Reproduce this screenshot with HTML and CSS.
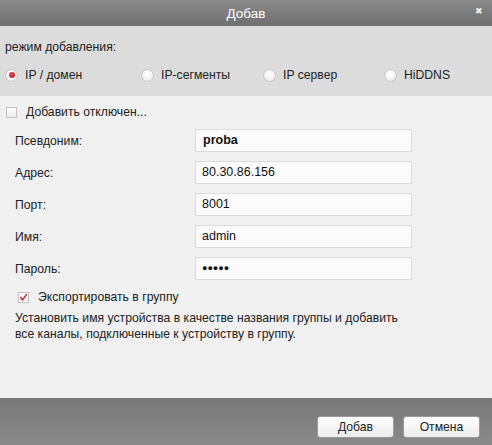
FILE: index.html
```html
<!DOCTYPE html>
<html lang="ru">
<head>
<meta charset="utf-8">
<title>Добав</title>
<link rel="stylesheet" href="styles.css">
</head>
<body>
<div class="dialog">
  <div class="titlebar">
    <span class="title">Добав</span>
    <span class="close">&#x2716;</span>
  </div>
  <div class="mode">
    <div class="mode-label">режим добавления:</div>
    <div class="radios">
      <div class="radio r1"><span class="dot on"></span><span>IP / домен</span></div>
      <div class="radio r2"><span class="dot"></span><span>IP-сегменты</span></div>
      <div class="radio r3"><span class="dot"></span><span>IP сервер</span></div>
      <div class="radio r4"><span class="dot"></span><span>HiDDNS</span></div>
    </div>
  </div>
  <div class="main">
    <div class="check-row top">
      <span class="box"></span><span>Добавить отключен...</span>
    </div>
    <div class="fields">
      <div class="field"><span class="label">Псевдоним:</span><div class="input bold">proba</div></div>
      <div class="field"><span class="label">Адрес:</span><div class="input">80.30.86.156</div></div>
      <div class="field"><span class="label">Порт:</span><div class="input">8001</div></div>
      <div class="field"><span class="label">Имя:</span><div class="input">admin</div></div>
      <div class="field"><span class="label">Пароль:</span><div class="input pass">&#9679;&#9679;&#9679;&#9679;&#9679;</div></div>
    </div>
    <div class="check-row export">
      <span class="box checked">
        <svg width="11" height="11" viewBox="0 0 11 11"><path d="M2 5.5 L4.5 8.5 L9 2" fill="none" stroke="#c0262a" stroke-width="1.8" stroke-linecap="round" stroke-linejoin="round"/></svg>
      </span><span>Экспортировать в группу</span>
    </div>
    <p class="desc">Установить имя устройства в качестве названия группы и добавить<br>все каналы, подключенные к устройству в группу.</p>
  </div>
  <div class="footer">
    <button class="btn">Добав</button>
    <button class="btn">Отмена</button>
  </div>
</div>
</body>
</html>
```

FILE: styles.css
```css
html, body {
  margin: 0;
  padding: 0;
}
body {
  font-family: "Liberation Sans", Arial, sans-serif;
  font-size: 12.2px;
  color: #222222;
  background: #f0f0f0;
}
.dialog {
  width: 492px;
  height: 445px;
  display: flex;
  flex-direction: column;
}
.titlebar {
  position: relative;
  height: 26px;
  background: linear-gradient(#8a8a8a, #6f6f6f);
  display: flex;
  align-items: center;
  justify-content: center;
  color: #ffffff;
  font-size: 13.5px;
}
.close {
  position: absolute;
  right: 9px;
  top: 6px;
  font-size: 9px;
  color: #f2f2f2;
}
.mode {
  height: 70px;
  box-sizing: border-box;
  background: #dcdcdc;
  padding: 13px 0 0 5px;
}
.mode-label {
  line-height: 16px;
}
.radios {
  display: flex;
  margin-top: 12px;
  line-height: 16px;
}
.radio {
  display: flex;
  align-items: center;
  gap: 7px;
}
.r1 { width: 136px; }
.r2 { width: 122px; }
.r3 { width: 121px; }
.dot {
  width: 13px;
  height: 13px;
  border-radius: 50%;
  box-sizing: border-box;
  border: 1px solid #c8c8c8;
  background: radial-gradient(circle at 50% 40%, #ffffff 0%, #f4f4f4 50%, #dedede 100%);
  position: relative;
}
.dot.on::after {
  content: "";
  position: absolute;
  left: 2.5px;
  top: 2.5px;
  width: 6px;
  height: 6px;
  border-radius: 50%;
  background: radial-gradient(circle at 45% 40%, #e0505a, #b8141e);
}
.main {
  flex: 1;
  background: #f0f0f0;
  padding: 8px 0 0 0;
}
.check-row {
  display: flex;
  align-items: center;
  gap: 9px;
  line-height: 16px;
}
.check-row.top {
  padding-left: 6px;
}
.check-row.export {
  padding-left: 18px;
  margin-top: 9px;
}
.box {
  width: 11px;
  height: 11px;
  box-sizing: border-box;
  border: 1px solid #c4c4c4;
  background: linear-gradient(#ffffff, #ececec);
  display: flex;
  align-items: center;
  justify-content: center;
}
.box.checked {
  background: #f6f6f6;
}
.box svg {
  display: block;
}
.fields {
  display: flex;
  flex-direction: column;
  gap: 9px;
  margin-top: 9px;
}
.field {
  display: flex;
  align-items: center;
  padding-left: 15px;
}
.label {
  width: 180px;
}
.input {
  width: 217px;
  height: 23px;
  box-sizing: border-box;
  border: 1px solid #dcdcdc;
  background: #fbfbfb;
  padding-left: 6px;
  line-height: 21px;
  font-size: 12.5px;
  color: #111;
}
.input.bold {
  font-weight: bold;
  padding-left: 7px;
}
.input.pass {
  font-size: 9px;
}
.desc {
  margin: 5px 0 0 15px;
  line-height: 16px;
}
.footer {
  height: 47px;
  background: linear-gradient(#787878, #8a8a8a);
  display: flex;
  justify-content: flex-end;
  align-items: flex-start;
  gap: 9px;
  padding: 18px 12px 0 0;
  box-sizing: border-box;
}
.btn {
  width: 77px;
  height: 22px;
  border: 1px solid #9a9a9a;
  border-radius: 3px;
  background: linear-gradient(#ffffff, #ececec);
  font-family: "Liberation Sans", Arial, sans-serif;
  font-size: 12.2px;
  color: #222;
  padding: 0;
}
```
